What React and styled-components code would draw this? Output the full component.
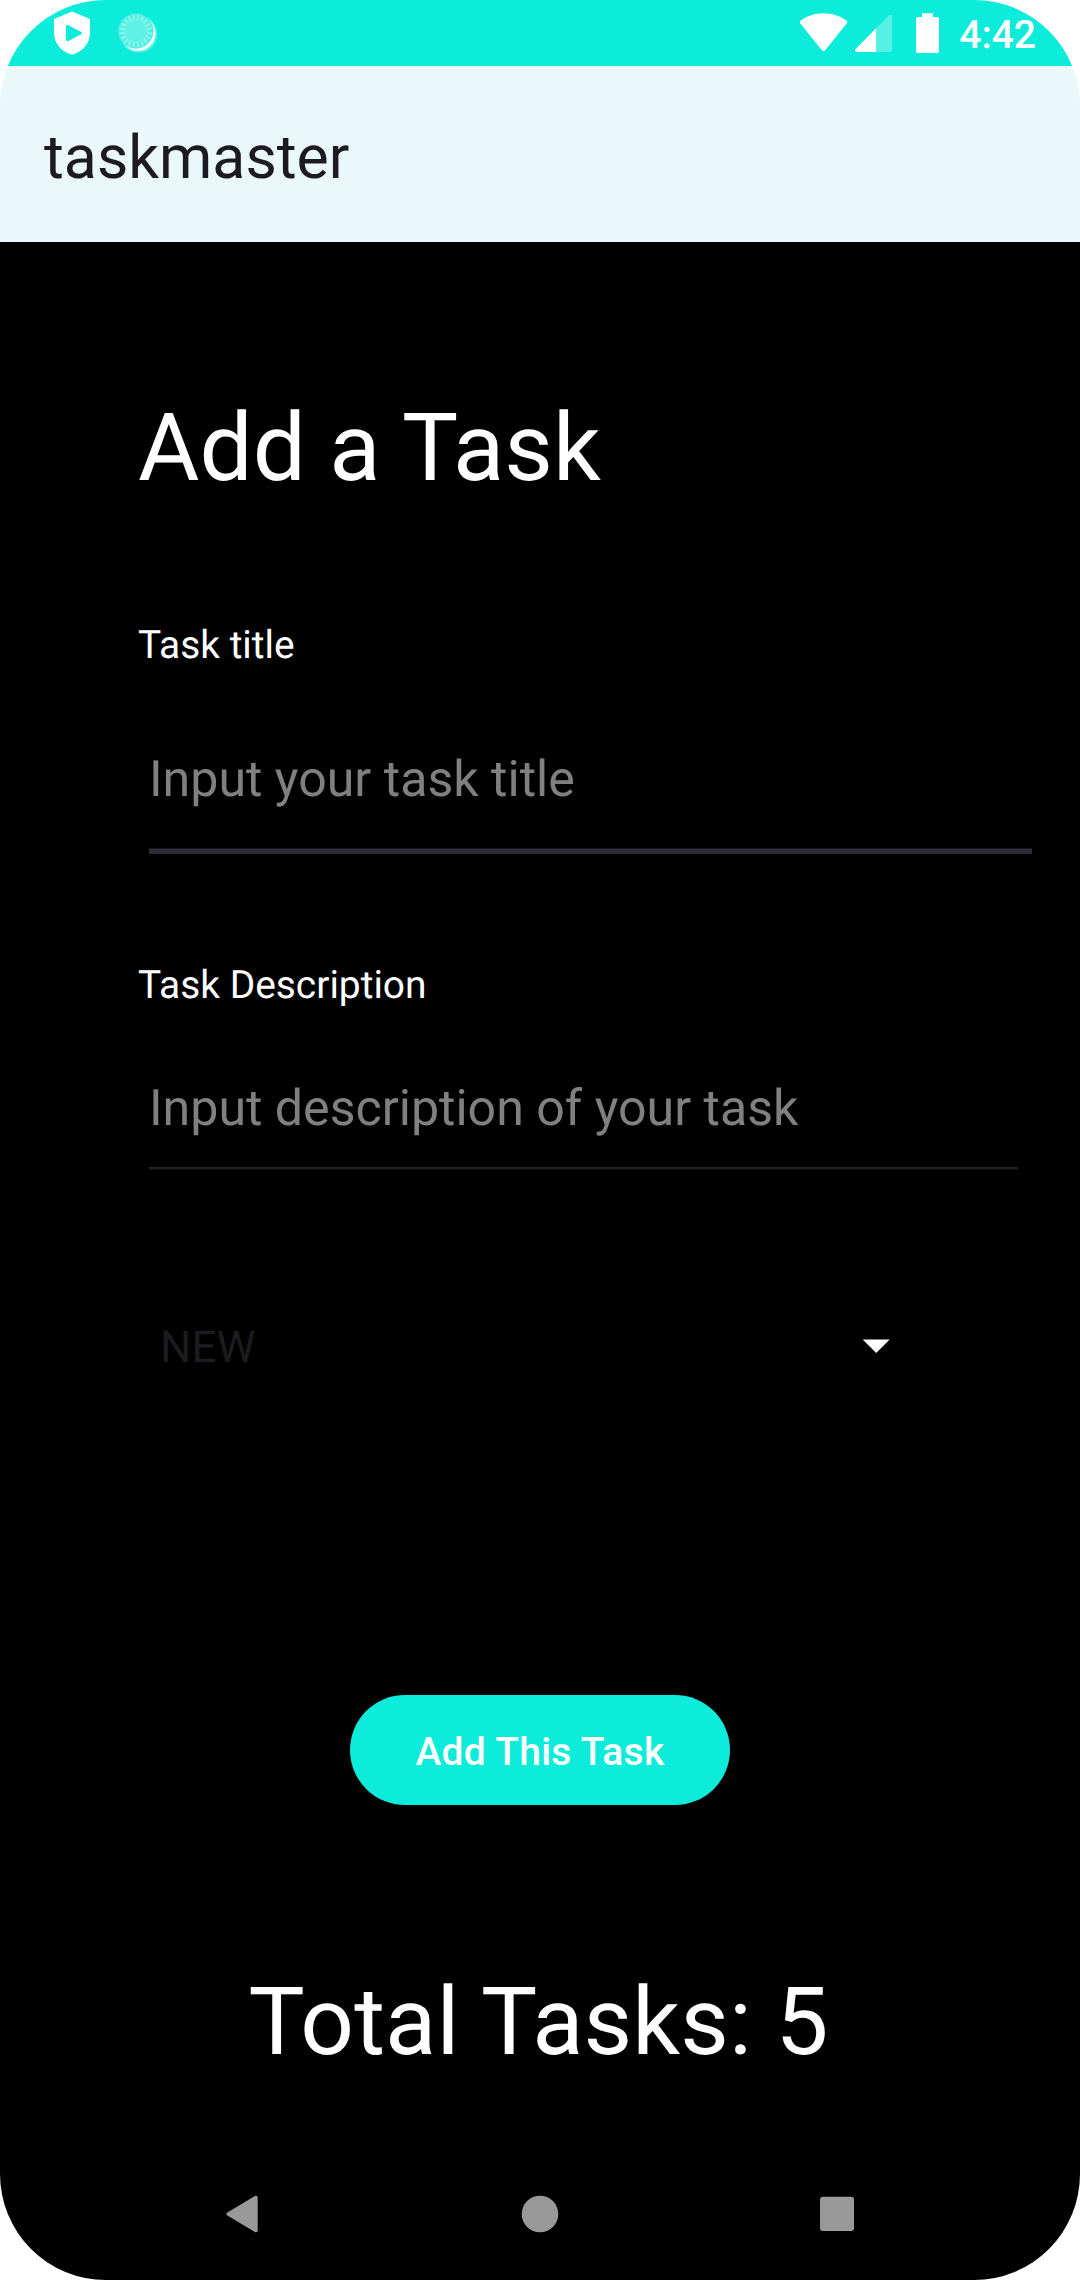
import React from "react";
import styled, { createGlobalStyle } from "styled-components";

const GlobalStyle = createGlobalStyle`
  *, *::before, *::after { box-sizing: border-box; }
  html, body { margin: 0; padding: 0; background: #fff; }
`;

const Screen = styled.div`
  display: flex;
  flex-direction: column;
  width: 1080px;
  height: 2280px;
  overflow: hidden;
  border-radius: 106px;
  color: #fff;
  font-family: Roboto, "Noto Sans", sans-serif;
  text-rendering: geometricPrecision;
`;

const StatusBar = styled.header`
  display: flex;
  justify-content: space-between;
  height: 66px;
  padding: 0 44px 0 54px;
  background: #0debda;
`;

const StatusGroup = styled.div`
  display: flex;
  align-items: flex-start;
`;

const StatusIcon = styled.svg`
  display: block;
  flex: none;
  height: 66px;
  width: ${(p) => p.$width}px;
  margin-right: ${(p) => p.$after || 0}px;
`;

const Clock = styled.span`
  font-size: 39px;
  font-weight: 500;
  line-height: 46px;
  padding-top: 12px;
`;

const AppBar = styled.div`
  display: flex;
  align-items: center;
  height: 176px;
  padding: 7px 44px 0;
  background: #eaf8fa;
`;

const AppTitle = styled.span`
  color: #1c1b1f;
  font-size: 60.75px;
  line-height: 72px;
`;

const Content = styled.main`
  display: flex;
  flex-direction: column;
  align-items: flex-start;
  flex: 1;
  padding: 152px 0 0 138px;
  background: #000;
`;

const Heading = styled.h1`
  margin: 0;
  font-size: 94.25px;
  font-weight: 400;
  line-height: 110px;
  white-space: nowrap;
`;

const Label = styled.label`
  margin-top: ${(p) => p.$gap}px;
  font-size: 38.9px;
  line-height: 46px;
`;

const Field = styled.div`
  width: ${(p) => p.$width}px;
  margin: ${(p) => p.$gap}px 0 0 11px;
  padding-bottom: ${(p) => p.$pad}px;
  border-bottom: ${(p) => p.$line}px solid ${(p) => p.$color};
  box-shadow: ${(p) => p.$edge};
  color: #808080;
  font-size: 50.1px;
  line-height: 58px;
  white-space: nowrap;
`;

const Spinner = styled.div`
  display: flex;
  align-items: center;
  justify-content: space-between;
  width: 730px;
  height: 52px;
  margin: 152px 0 0 22px;
  color: #1c1b1f;
  font-size: 44px;
  line-height: 52px;
`;

const Caret = styled.svg`
  display: block;
  width: 28px;
  height: 14px;
  margin-top: -2px;
`;

const Centered = styled.div`
  display: flex;
  flex-direction: column;
  align-items: center;
  width: 804px;
  margin-top: 322px;
`;

const AddButton = styled.button`
  width: 380px;
  height: 110px;
  padding: 4px 0 0;
  border: 0;
  border-radius: 55px;
  background: #0debda;
  color: #fff;
  font-family: inherit;
  font-size: 39px;
  font-weight: 500;
  line-height: 46px;
  letter-spacing: 0.27px;
`;

const Total = styled.div`
  margin-top: 163px;
  padding-right: 3px;
  font-size: 94.25px;
  line-height: 110px;
  letter-spacing: 0.1px;
  white-space: nowrap;
`;

const NavBar = styled.nav`
  display: flex;
  justify-content: space-between;
  align-items: flex-start;
  height: 132px;
  padding: 46px 224px 0 224px;
  background: #000;
`;

const NavIcon = styled.svg`
  display: block;
  width: 40px;
  height: 40px;
`;

const ticks = Array.from({ length: 20 }, (_, i) => i * 18);

function ShieldIcon() {
  return (
    <StatusIcon $width={36} $after={26} viewBox="54 0 36 66">
      <path
        fill="#fff"
        fillRule="evenodd"
        d="M72 11.6 90 19v14c0 9.500-6.500 18.500-18 21.700C60.500 51.500 54 42.500 54 33V19ZM66 26.500v13c0 1.500 1 2 2.300 1.400l13-6.600c1.200-.7 1.200-1.700 0-2.300l-13-6.800C67 24.500 66 25 66 26.500Z"
      />
    </StatusIcon>
  );
}

function SyncIcon() {
  return (
    <StatusIcon $width={44} viewBox="116 0 44 66">
      <circle cx="138.600" cy="34" r="18.600" fill="#fff" opacity="0.35" />
      <circle cx="138" cy="33.300" r="17.400" fill="#fff" />
      <circle cx="135.900" cy="31" r="17.700" fill="#4feee2" />
      <circle cx="135.900" cy="31" r="12.500" fill="#60f1e6" />
      <g stroke="#85f5ec" strokeWidth="2.400">
        {ticks.map((a) => (
          <line key={a} x1="135.900" y1="14.600" x2="135.900" y2="19.800" transform={`rotate(${a + 9} 135.9 31)`} />
        ))}
      </g>
    </StatusIcon>
  );
}

export default function App() {
  return (
    <>
      <GlobalStyle />
      <Screen>
        <StatusBar>
          <StatusGroup>
            <ShieldIcon />
            <SyncIcon />
          </StatusGroup>
          <StatusGroup>
            <StatusIcon $width={48} $after={7} viewBox="800 0 48 66">
              <path
                fill="#fff"
                d="M800.600 20.600C807 15.900 815 13.200 823.500 13.200S840 15.900 846.500 20.600c1 .8 1.100 2 .3 3L825.300 50c-1 1.200-2.600 1.200-3.600 0L800.300 23.600c-.8-1-.7-2.200.3-3Z"
              />
            </StatusIcon>
            <StatusIcon $width={38} $after={23} viewBox="855 0 38 66">
              <path fill="#fff" opacity="0.3" d="M876 28.200 889.200 15.400c1.100-1 2.800-.4 2.800 1.100V50c0 1.200-.8 2-2 2H876Z" />
              <path fill="#fff" d="M876 28.200V52H856.800c-1.700 0-2.400-1.900-1.200-3.100Z" />
            </StatusIcon>
            <StatusIcon $width={23} $after={20} viewBox="916 0 23 66">
              <path
                fill="#fff"
                d="M922 13.200h11V17h4.200c1 0 1.800.8 1.800 1.800v32.400c0 1-.8 1.800-1.800 1.800h-19.400c-1 0-1.800-.8-1.800-1.800V18.800c0-1 .8-1.800 1.800-1.800h4.200Z"
              />
            </StatusIcon>
            <Clock>4:42</Clock>
          </StatusGroup>
        </StatusBar>
        <AppBar>
          <AppTitle>taskmaster</AppTitle>
        </AppBar>
        <Content>
          <Heading>Add a Task</Heading>
          <Label $gap={119}>Task title</Label>
          <Field $gap={82} $width={883} $pad={40} $line={5} $color="#302d38" $edge="inset 0 -1px 0 #19171d">
            Input your task title
          </Field>
          <Label $gap={109}>Task Description</Label>
          <Field $gap={71} $width={869} $pad={29} $line={2} $color="#232227" $edge="0 1px 0 #0b0b0d">
            Input description of your task
          </Field>
          <Spinner>
            <span>NEW</span>
            <Caret viewBox="0 0 28 14">
              <path d="M.7 .5H27.700L14.200 14Z" fill="#fff" />
            </Caret>
          </Spinner>
          <Centered>
            <AddButton>Add This Task</AddButton>
            <Total>Total Tasks: 5</Total>
          </Centered>
        </Content>
        <NavBar>
          <NavIcon viewBox="0 0 40 40">
            <path
              fill="#999"
              d="M3.400 18.500 30.500 2.300C32.200 1.200 33.700 2 33.700 3.800v32.400c0 1.800-1.500 2.600-3.200 1.500L3.400 21.500c-1.500-.9-1.500-2.100 0-3Z"
            />
          </NavIcon>
          <NavIcon viewBox="0 0 40 40">
            <circle cx="20" cy="20" r="18.300" fill="#999" />
          </NavIcon>
          <NavIcon viewBox="0 0 40 40">
            <rect x="4" y="2.700" width="34" height="34.300" rx="3" fill="#999" />
          </NavIcon>
        </NavBar>
      </Screen>
    </>
  );
}
